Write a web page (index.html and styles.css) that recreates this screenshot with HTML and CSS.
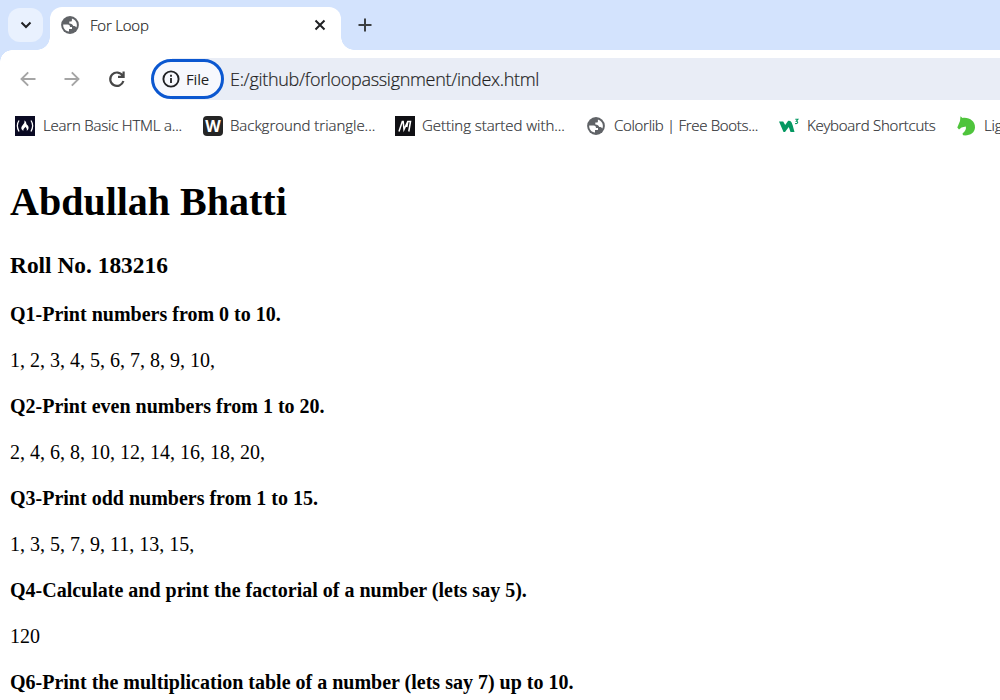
FILE: index.html
```html
<!DOCTYPE html>
<html lang="en">
<head>
<meta charset="utf-8">
<title>For Loop</title>
<link rel="stylesheet" href="styles.css">
</head>
<body>
<svg class="defs" aria-hidden="true">
  <symbol id="globe" viewBox="0 0 18 18"><circle cx="9" cy="9" r="8.900" fill="#606367"/><path d="M2.200 8.600H6.600C8.400 8.600 9 9.500 9 11H11V13H8V15.600C4.400 15.300 2 12.400 2.200 8.600ZM10.900 2.500C14 3.400 15.900 5.900 15.900 9C15.900 10 15.700 10.800 15.300 11.400C14.500 10.400 13.800 10.100 12.300 10.100C11.600 8.300 10.700 7.700 8.300 7.500V5.500H10.200C11 5.500 10.900 4.700 10.900 2.500Z" fill="#fff"/></symbol>
</svg>
<header class="tabstrip">
  <button class="tab-search" aria-label="Search tabs"><svg width="12" height="8" viewBox="0 0 12 8"><path d="M1.500 1.500 6 6l4.500-4.500" fill="none" stroke="#202124" stroke-width="2"/></svg></button>
  <div class="tab">
    <svg class="globe"><use href="#globe"/></svg>
    <span class="tab-title">For Loop</span>
    <svg class="close" width="12" height="12" viewBox="0 0 12 12"><path d="M1.500 1.500l9 9m0-9-9 9" stroke="#202124" stroke-width="2"/></svg>
  </div>
  <svg class="plus" width="14" height="14" viewBox="0 0 14 14"><path d="M7 .5v13M.5 7h13" stroke="#3c4043" stroke-width="2"/></svg>
</header>
<nav class="toolbar">
  <svg class="nav-icon" width="16" height="16" viewBox="0 0 16 16"><path d="M15.500 8H2M8.200 1.300 1.500 8l6.700 6.700" fill="none" stroke="#a5a5a5" stroke-width="1.900"/></svg>
  <svg class="nav-icon forward" width="16" height="16" viewBox="0 0 16 16"><path d="M.5 8H14M7.800 1.300 14.500 8l-6.700 6.700" fill="none" stroke="#a5a5a5" stroke-width="1.900"/></svg>
  <svg class="nav-icon reload" width="18" height="18" viewBox="0 0 18 18"><path d="M14.700 5.800A6.700 6.700 0 1 0 15.400 11M15.600 1.500V6.800H10" fill="none" stroke="#474747" stroke-width="2.200"/></svg>
  <div class="address">
    <span class="chip"><svg width="18" height="18" viewBox="0 0 18 18"><circle cx="9" cy="9" r="7.600" fill="none" stroke="#202124" stroke-width="1.900"/><path d="M9 8v5M9 4.700v2" stroke="#202124" stroke-width="1.800"/></svg><span class="chip-text">File</span></span>
    <span class="url">E:/github/forloopassignment/index.html</span>
  </div>
</nav>
<nav class="bookmarks">
  <a class="bookmark b1"><svg class="icon" viewBox="0 0 20 20"><path fill="#0a0a23" d="M0 0h20v20H0z"/><path d="M4 4.500Q.7 9.500 4 15.500M16 4.500Q19.300 9.500 16 15.500" fill="none" stroke="#fff" stroke-width="1.300"/><path d="M9.300 4.500c3 1.500 1.200 3.500 3 4.500 1.600 1.500 2 4.200-.6 5.800.5-1.500.1-2.600-1.500-4-.1 1.600-2.300 1.700-1.700 4-3.200-1.500-2.400-4-.7-5.900C9.200 7.400 9.800 6.500 9.300 4.500z" fill="#fff"/></svg><span class="label">Learn Basic HTML a...</span></a>
  <a class="bookmark b2"><span class="icon w-icon">W</span><span class="label">Background triangle...</span></a>
  <a class="bookmark b3"><svg class="icon" viewBox="0 0 20 20"><path fill="#101014" d="M0 0h20v20H0z"/><path d="M4 15.500 7.300 5.500H8.200L9 13.500 12.800 5.500H15.500L13.800 15.500M12.800 5.500 11.800 11" fill="none" stroke="#fff" stroke-width="1.500"/></svg><span class="label">Getting started with...</span></a>
  <a class="bookmark b4"><svg class="globe"><use href="#globe"/></svg><span class="label">Colorlib | Free Boots...</span></a>
  <a class="bookmark b5"><svg class="icon" viewBox="0 0 20 20"><path d="M0 5.500H4.200L6.200 9 9 5C13 4 13.500 9 15.500 16H11.500L9.800 11 6 16H4.500z" fill="#059862"/><path d="M16.300 3.300h2.600l-1.600 2c2 0 1.900 2.700-1.200 2.200" fill="none" stroke="#059862" stroke-width="1.100"/></svg><span class="label">Keyboard Shortcuts</span></a>
  <a class="bookmark b6"><svg class="icon" viewBox="0 0 20 20"><path d="M3.500.2 5.500 2C12 1 18.300 5 18 11.500 17.700 17 13 20 6 19.300L5.500 17.500Q9.800 14 8.800 10.500L4.500 11.500 2 13.500.3 11.500 3 5z" fill="#4fc43c"/></svg><span class="label">Lighthouse</span></a>
</nav>
<main class="page">
  <h1>Abdullah Bhatti</h1>
  <h3>Roll No. 183216</h3>
  <h4>Q1-Print numbers from 0 to 10.</h4>
  <p>1, 2, 3, 4, 5, 6, 7, 8, 9, 10,</p>
  <h4>Q2-Print even numbers from 1 to 20.</h4>
  <p>2, 4, 6, 8, 10, 12, 14, 16, 18, 20,</p>
  <h4>Q3-Print odd numbers from 1 to 15.</h4>
  <p>1, 3, 5, 7, 9, 11, 13, 15,</p>
  <h4>Q4-Calculate and print the factorial of a number (lets say 5).</h4>
  <p>120</p>
  <h4>Q6-Print the multiplication table of a number (lets say 7) up to 10.</h4>
</main>
</body>
</html>
```
FILE: styles.css
```css
* { box-sizing: border-box; }
body { margin: 0; height: 700px; overflow: hidden; background: #fff; color: #000; font-family: "Open Sans", "Noto Sans", sans-serif; }
svg { display: block; flex: none; }
.defs { position: absolute; width: 0; height: 0; }
.globe { width: 18px; height: 18px; }
.tabstrip { height: 50px; display: flex; align-items: flex-start; padding: 7px 0 0 8px; background: #d3e3fd; }
.tab-search { width: 35px; height: 34px; margin-top: 1px; padding: 0; border: 0; border-radius: 12px; background: #e9f1fe; display: flex; align-items: center; justify-content: center; }
.tab { position: relative; width: 291px; height: 43px; margin-left: 7px; padding: 0 15px 7px 11px; display: flex; align-items: center; background: #fff; border-radius: 12px 12px 0 0; }
.tab::before, .tab::after { content: ""; position: absolute; bottom: 0; width: 13px; height: 13px; }
.tab::before { left: -13px; background: radial-gradient(circle at 0 0, transparent 12.5px, #fff 13px); }
.tab::after { right: -13px; background: radial-gradient(circle at 100% 0, transparent 12.5px, #fff 13px); }
.tab-title { margin-left: 11px; padding-bottom: 1px; font-size: 15px; font-weight: 300; color: #1f1f1f; letter-spacing: -.2px; }
.tab-title, .url, .label { -webkit-text-stroke: .2px currentColor; }
.close { margin-left: auto; }
.plus { margin: 11px 0 0 17px; }
.toolbar { height: 50px; display: flex; align-items: center; padding: 8px 0 0 20px; background: radial-gradient(circle at 12px 12px, #fff 11.500px, #d3e3fd 12px) 0 0 / 12px 12px no-repeat; }
.forward { margin-left: 28px; }
.reload { margin-left: 28px; }
.address { flex: 1; height: 42px; margin-left: 25px; display: flex; align-items: center; background: linear-gradient(#e9edf6, #e9edf6) 21px 0 / 100% 100% no-repeat; }
.chip { width: 73px; height: 40px; padding-left: 8px; display: flex; align-items: center; border: 3px solid #0b57d0; border-radius: 20px; background: #f7f8fd; }
.chip-text { margin-left: 6px; padding-bottom: 1px; font-size: 15px; color: #1f1f1f; letter-spacing: -.2px; }
.url { margin-left: 6px; font-size: 18px; font-weight: 300; color: #1f1f1f; letter-spacing: -.31px; white-space: nowrap; }
.bookmarks { height: 52px; display: flex; align-items: center; padding-left: 15px; overflow: hidden; }
.bookmark { display: flex; align-items: center; flex: none; gap: 8px; height: 22px; font-size: 15px; font-weight: 300; color: #303236; white-space: nowrap; letter-spacing: -.2px; }
.label { padding-bottom: 2px; }
.icon { width: 20px; height: 20px; flex: none; }
.w-icon { background: #252525; color: #fff; border-radius: 4px; font: bold 16px/20px "Open Sans", sans-serif; text-align: center; letter-spacing: 0; }
.b1 { width: 188px; }
.b2 { width: 192px; gap: 7px; letter-spacing: -.03px; }
.b3 { width: 192px; gap: 7px; letter-spacing: -.04px; }
.b4 { width: 192px; gap: 9px; letter-spacing: -.3px; }
.b5 { width: 178px; letter-spacing: -.24px; }
.b6 { gap: 7px; }
.page { padding: 23px 10px 0; font: 20px/26px "Liberation Serif", "Times New Roman", serif; }
h1, h3, h4, p { margin: 0; white-space: nowrap; }
h1 { font-size: 40px; line-height: 54px; margin-bottom: 22px; }
h3 { font-size: 23.400px; line-height: 28px; margin-bottom: 22px; }
h4, p { font-size: 20px; line-height: 26px; margin-bottom: 20px; }
```
